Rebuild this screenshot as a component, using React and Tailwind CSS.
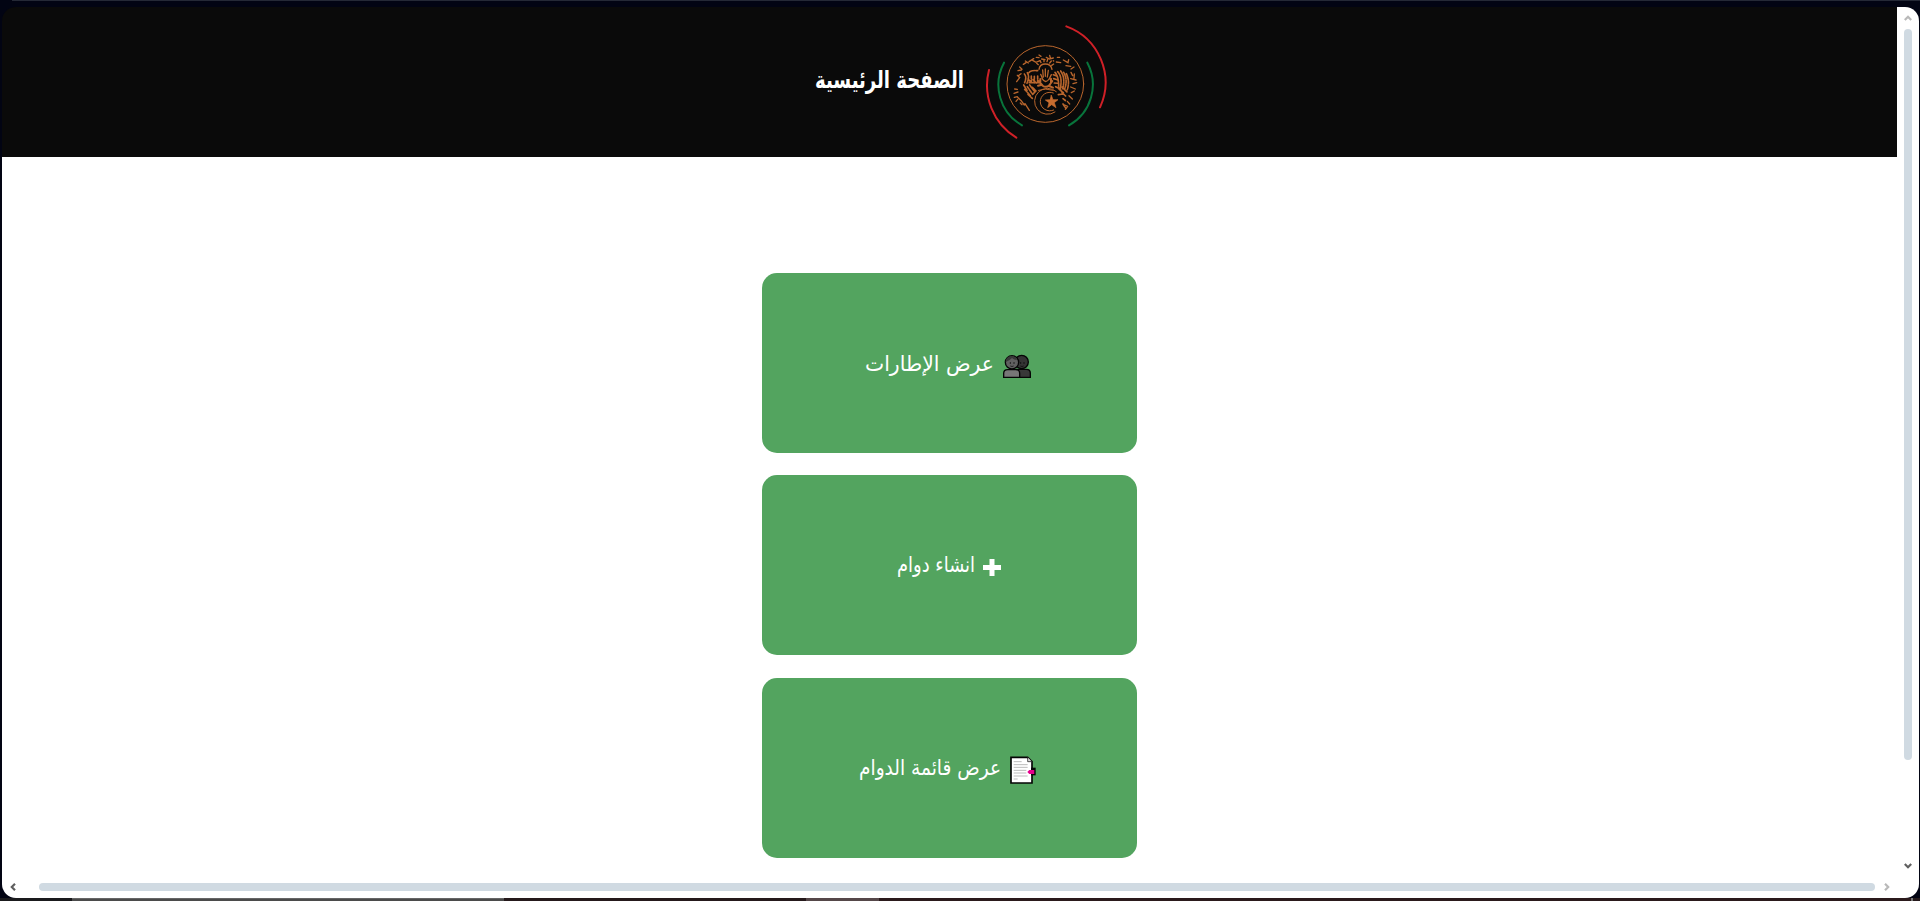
function Emblem() {
  return (
    <svg className="h-[150px] w-[150px] shrink-0" viewBox="0 0 450 450" fill="none" strokeLinecap="round">
      <g strokeWidth="6">
        <path d="M289 49A179 179 0 0 1 390 292M57 180A184 184 0 0 0 139 383" stroke="#cf2027" />
        <path d="M102 158A140 140 0 0 0 156 346M352 158A140 140 0 0 1 297 346" stroke="#08743b" />
      </g>
      <g stroke="#b9662d">
        <circle cx="226" cy="222" r="115" strokeWidth="3" />
        <g strokeWidth="4">
          <path d="M132 250l12-4M134 237l8 1M133 262l9-2M138 274l5-6M140 215l9-12-7-7M145 197l8-6M144 182l10-2M149 171l7 7M160 163l8-5M166 153l9 6M177 155l14-9M188 151l10 6 12-5M199 142l8 1M207 135l6 4M215 147l10 2M229 142l9 5 12-3M239 136l2 8M250 152l1 1M262 142h7M259 156l13 2M280 150l14 8 2-9M288 167l14 2M303 177l9-6M303 187l5 10M313 192l-1 13M302 206l16 4M309 221l11-3M302 231l14 6M304 248l9-5M297 257l10 10M292 274l7 8M284 285l9 4M286 298l5-6M143 262l12 12M153 271l10 14M165 281l13 20M151 279l5 5" />
          <path d="M163 192q8 8 1 26M172 188q8 12-2 34M161 225l10 16M164 238l17 19M172 230l16 23M179 225l15 20M187 232l10 10M177 188q5-8 26-6M184 198v18M193 199v20M203 198v20M178 218h28M174 207l10 10M189 209l10 10M174 253l13 12M188 253l10-10M255 187q12 13 11 49M263 185q15 16 8 50M272 183q15 21 6 53M281 187q13 22 3 50M289 191q11 22 3 48M250 194l12 5M251 206l13 4M253 219l12 1M257 230l15 8M268 238l12 10M276 248l11 10M276 231l15 15M279 266l9 7M265 254l14-2M279 282l8 12" strokeWidth="5" strokeDasharray="9 3" />
          <path d="M207 178q2-16 19-16t20 16" />
          <path d="M205 164l-5-4M213 158l-3-6M222 155v-7M231 155l2-7M239 159l5-6M245 166l6-4" />
          <path d="M217 205l-5-12M220 201l-2-21M226 199v-22M232 201l3-20M237 208l7-14M216 205q11 18 21 2" />
          <path d="M206 213l12 14q9 7 19 0l10-14M211 207v13M243 206v13M204 227l12-3M237 228l12 5" strokeWidth="6" />
        </g>
        <path d="M259 245A39 39 0 1 0 255 306M250 249A28 28 0 1 0 251 300M205 241q20-8 45 0" strokeWidth="3" />
      </g>
      <path d="M244 256l5 13 15 0-11 9 5 15-13-9-12 9 4-15-11-8 14-1z" fill="#c76c2f" stroke="#c76c2f" strokeWidth="2" />
    </svg>
  );
}

function PeopleIcon() {
  return (
    <svg className="h-[24px] w-[28px] shrink-0" viewBox="0 0 84 72" stroke="#050505" strokeWidth="4">
      <circle cx="56" cy="24" r="20" fill="#343434" />
      <path d="M40 70V46h30q12 0 12 11v13z" fill="#383838" />
      <circle cx="27" cy="25" r="20" fill="#606060" />
      <path d="M2 70V58q0-11 12-11h24q12 0 12 11v12z" fill="#777" />
      <path d="M8 24q0-17 18-18 12 1 16 12-10 0-15-6-7 8-19 12z" fill="#383838" stroke="none" />
      <path d="M22 25v4M33 25v4M53 25v4M63 25v4" strokeWidth="3" />
      <path d="M22 36q5 3 10 0M52 36q5 3 10 0" fill="none" strokeWidth="2" />
    </svg>
  );
}

function PlusIcon() {
  return (
    <svg className="h-[17px] w-[18px] shrink-0" viewBox="0 0 18 17">
      <path d="M6.500 0h5v6H18v5h-6.500v6h-5v-6H0V6h6.500z" fill="white" />
    </svg>
  );
}

function PageIcon() {
  return (
    <svg className="h-[28px] w-[26px] shrink-0" viewBox="0 0 78 84">
      <path d="M3 4h50l13 13v64H3z" fill="white" stroke="#050505" strokeWidth="5" />
      <path d="M53 4v13h13" fill="#ddd" stroke="#050505" strokeWidth="2" />
      <path d="M11 17h24M11 26h42M11 34h42M11 43h38M11 51h38M11 60h42M11 69h12" stroke="#bbb" strokeWidth="3" />
      <path d="M63 35h14v23H63z" fill="#050505" />
      <path d="M52 48l6-6h15v12H58z" fill="#e6008c" />
    </svg>
  );
}

function Card({ icon, label, width, className }) {
  return (
    <button className={`flex h-[180px] w-[375px] shrink-0 items-center rounded-[15px] bg-[#53a45f] text-white ${className}`}>
      {icon}
      <svg className={`h-[40px] shrink-0 overflow-visible ${width}`}>
        <text x="100%" y="25" direction="rtl" fill="white" fontSize="21.5" textLength="100%" lengthAdjust="spacingAndGlyphs">{label}</text>
      </svg>
    </button>
  );
}

function Chevron({ className, color }) {
  return (
    <svg className={`h-[8px] w-[8px] shrink-0 overflow-visible ${className}`} viewBox="0 0 8 8" fill="none" stroke={color} strokeWidth="2.2">
      <path d="M.8 2L4 5.200 7.200 2" />
    </svg>
  );
}

export default function App() {
  return (
    <div className="flex h-[901px] w-[1920px] flex-col overflow-hidden bg-[#020413] font-['DejaVu_Sans',sans-serif]">
      <div className="ml-[12px] h-px shrink-0 bg-[#252936]" />
      <div className="mt-[6px] ml-[2px] flex h-[891px] w-[1917px] shrink-0 flex-col overflow-hidden rounded-[14px]">
        <div className="flex h-[869px] shrink-0">
          <main className="flex w-[1895px] flex-col overflow-hidden">
            <header dir="rtl" className="flex h-[150px] shrink-0 items-start bg-[#0a0a0a] pr-[777px]">
              <div className="mt-[3px] shrink-0"><Emblem /></div>
              <h1 className="mt-[54px] mr-[6px] shrink-0">
                <svg className="h-[40px] w-[149px] overflow-visible">
                  <text x="100%" y="27" direction="rtl" fill="white" fontSize="24" fontWeight="bold" textLength="149" lengthAdjust="spacingAndGlyphs">الصفحة الرئيسية</text>
                </svg>
              </h1>
            </header>
            <div dir="rtl" className="flex flex-1 flex-col gap-[22px] bg-white pt-[116px] pr-[760px]">
              <Card icon={<PeopleIcon />} label="عرض الإطارات" width="w-[129px]" className="gap-[9px] pt-[6px] pr-[106px]" />
              <Card icon={<PlusIcon />} label="انشاء دوام" width="w-[78px]" className="gap-[8px] pt-[4px] pr-[136px]" />
              <Card icon={<PageIcon />} label="عرض قائمة الدوام" width="w-[142px]" className="mt-px gap-[9px] pt-[4px] pr-[101px]" />
            </div>
          </main>
          <aside className="flex w-[22px] shrink-0 flex-col items-center bg-white pt-[7px]">
            <Chevron className="rotate-180" color="#b9b9b9" />
            <div className="mt-[7px] h-[731px] w-[8px] rounded-full bg-[#d0dae2]" />
            <Chevron className="mt-auto mb-[6px]" color="#606060" />
          </aside>
        </div>
        <div className="flex h-[22px] shrink-0 items-center bg-white pl-[7px]">
          <Chevron className="rotate-90" color="#606060" />
          <div className="ml-[22px] h-[8px] w-[1836px] shrink-0 rounded-full bg-[#d0dae2]" />
          <Chevron className="ml-[8px] -rotate-90" color="#b9b9b9" />
        </div>
      </div>
      <div className="flex h-[3px] shrink-0 bg-[#25191b]">
        <div className="w-[72px] bg-[#1a1a1d]" />
        <div className="w-[432px] border-t border-[#666] bg-[#4b4b4b]" />
        <div className="w-[302px] bg-[#25191b]" />
        <div className="w-[73px] bg-[#554749]" />
        <div className="flex-1 bg-[#2b1a1c]" />
        <div className="mr-[7px] w-[2px] bg-[#777]" />
      </div>
    </div>
  );
}
